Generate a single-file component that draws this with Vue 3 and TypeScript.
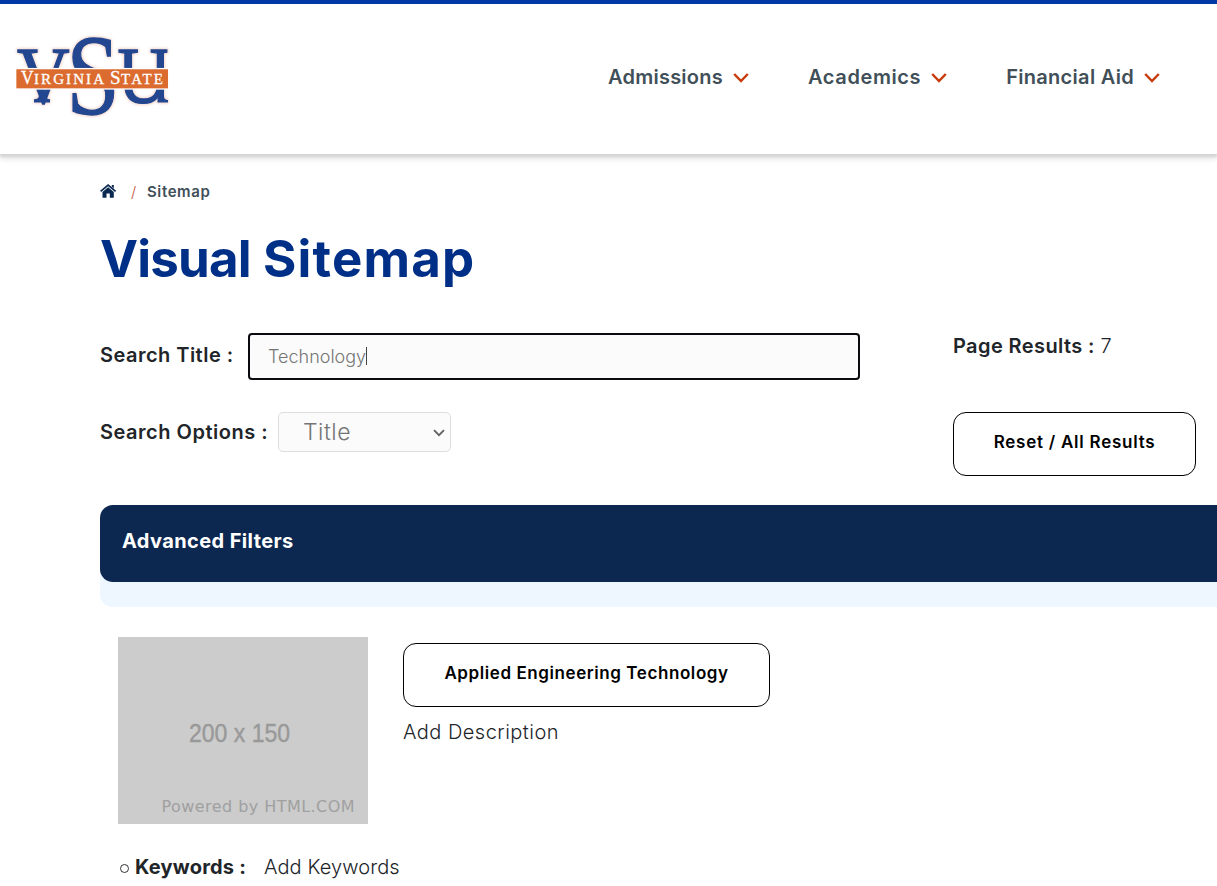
<script setup lang="ts">
import { ref } from 'vue'

interface NavItem { label: string; key: string }

const nav: NavItem[] = [
  { label: 'Admissions', key: 'admissions' },
  { label: 'Academics', key: 'academics' },
  { label: 'Financial Aid', key: 'aid' },
]
const query = ref('Technology')
const option = ref('Title')
const resultCount = 7
</script>

<template>
  <div class="page">
    <header class="header">
      <svg class="logo" width="160" height="88" viewBox="12 32 160 88" role="img" aria-label="Virginia State">
        <g class="letters">
          <text transform="translate(17 103) scale(.91 1)" font-size="80">V</text>
          <path d="M34 99.2q5 0 5-4h7q0 4 4 4v3.2H34z" />
          <text class="s" transform="translate(66.5 113.8) scale(.83 1)" font-size="115">S</text>
          <text transform="translate(117.5 103) scale(.88 1)" font-size="80">U</text>
          <path d="M157.5 52h6.5v44q0 4 4 4v2.5h-10.5z" />
        </g>
        <rect class="band" x="15.7" y="68.6" width="153" height="20.4" />
        <text class="band-text" y="84.3" font-size="15">
          <tspan x="21" font-size="19" textLength="12.5" lengthAdjust="spacingAndGlyphs">V</tspan>
          <tspan x="34" textLength="70" lengthAdjust="spacing">IRGINIA</tspan>
          <tspan x="110" font-size="19">S</tspan>
          <tspan x="121" textLength="42" lengthAdjust="spacing">TATE</tspan>
        </text>
      </svg>
      <nav class="nav">
        <a v-for="item in nav" :key="item.key" class="nav-item" :class="item.key">
          <span>{{ item.label }}</span>
          <svg width="16" height="12" viewBox="0 0 16 12"><path d="M1.2 2 8 9 14.8 2" /></svg>
        </a>
      </nav>
    </header>

    <main class="main">
      <div class="crumbs">
        <svg width="17" height="14" viewBox="0 0 17 14">
          <path class="roof" d="M.6 7.4 8.1 1.1 15.6 7.4" />
          <path class="house" d="M8.1 3.3 13.8 8.1V13.2q0 .5-.5.5H9.8V9.5H6.5v4.2H3q-.5 0-.5-.5V8.1ZM11.8 1h2v3.4l-2-1.7z" />
        </svg>
        <span class="slash">/</span>
        <span class="here">Sitemap</span>
      </div>
      <h1 class="title"><span class="visual">Visual</span> <span class="sitemap">Sitemap</span></h1>

      <div class="search">
        <div class="fields">
          <div class="row first">
            <span class="label title-label">Search Title :</span>
            <div class="input"><span class="query">{{ query }}</span><i class="caret"></i></div>
          </div>
          <div class="row">
            <span class="label options-label">Search Options :</span>
            <div class="select">
              <span>{{ option }}</span>
              <svg width="12" height="8" viewBox="0 0 12 8"><path d="M1 1.2 6 6.2 11 1.2" /></svg>
            </div>
          </div>
        </div>
        <div class="results">
          <div class="count"><b>Page Results :</b> <span>{{ resultCount }}</span></div>
          <button class="btn reset"><span>Reset / All Results</span></button>
        </div>
      </div>

      <section class="filters">
        <div class="filters-head"><span>Advanced Filters</span></div>
      </section>

      <article class="entry">
        <svg class="thumb" width="250" height="187" viewBox="0 0 250 187">
          <rect width="250" height="187" fill="#ccc" />
          <text class="size" x="71" y="104.5" textLength="101" lengthAdjust="spacingAndGlyphs">200 x 150</text>
          <text class="powered" x="43.5" y="174.5" textLength="193" lengthAdjust="spacing">Powered by HTML.COM</text>
        </svg>
        <div class="info">
          <button class="btn program"><span>Applied Engineering Technology</span></button>
          <p class="desc">Add Description</p>
        </div>
      </article>
      <div class="keywords">
        <i class="bullet"></i><b>Keywords :</b><span>Add Keywords</span>
      </div>
    </main>
  </div>
</template>

<style>
body { background: #fff; overflow: hidden; }
</style>

<style scoped>
* { box-sizing: border-box; }
.page {
  width: 100%;
  height: 886px;
  overflow: hidden;
  font-family: Inter, "Liberation Sans", sans-serif;
  font-size: 20px;
  color: #212529;
}
.page span, .page b, .page p, .page h1 { white-space: nowrap; }
.header {
  height: 154px;
  border-top: 4px solid #0039a6;
  display: flex;
  justify-content: space-between;
  padding: 28px 57px 0 12px;
  box-shadow: 0 3px 2px #d6d6d6, 0 5px 6px #e4e4e4;
}
.logo { overflow: visible; }
.logo text { font-family: "Liberation Serif", serif; }
.letters {
  fill: #22468f;
  filter: drop-shadow(0 0 .8px #fff) drop-shadow(0 0 1px #e8ab98);
}
.letters text { stroke: #22468f; stroke-width: 1.3; }
.band { fill: #dc6b2f; stroke: #fff; stroke-width: 1.3; }
.logo .band-text { fill: #fff; stroke: #fff; stroke-width: .3; }
.nav { display: flex; height: 90px; align-items: center; gap: 59px; }
.nav-item { display: flex; align-items: center; gap: 10px; font-weight: 600; color: #414f59; line-height: 24px; }
.nav-item svg { fill: none; stroke: #c83c0c; stroke-width: 2.5; margin-top: 2px; }
.admissions { letter-spacing: .25px; }
.academics { letter-spacing: .6px; }
.aid { letter-spacing: .3px; }
.main { padding-left: 100px; }
.crumbs { display: flex; align-items: center; height: 24px; margin-top: 25px; font-size: 15px; }
.roof { fill: none; stroke: #0b2851; stroke-width: 1.7; }
.house { fill: #0b2851; }
.slash { margin-left: 14px; color: #c0553c; font-weight: 300; width: 16px; }
.here { font-weight: 600; color: #414f59; letter-spacing: .6px; }
.title {
  margin: 26px 0 0;
  font-size: 51px;
  line-height: 60px;
  font-weight: 700;
  color: #002f87;
}
.visual { letter-spacing: -.8px; }
.sitemap { letter-spacing: 1.2px; }
.search { display: flex; margin-top: 44px; height: 172px; }
.fields { width: 853px; flex: none; }
.row { display: flex; align-items: center; height: 40px; }
.row.first { height: 47px; margin-bottom: 32px; }
.label { font-weight: 600; flex: none; }
.title-label { width: 148px; letter-spacing: .47px; padding-bottom: 3px; }
.options-label { width: 178px; letter-spacing: .52px; }
.input {
  width: 612px;
  height: 47px;
  border: 2px solid #0b0b0f;
  border-radius: 4px;
  background: #fbfbfb;
  display: flex;
  align-items: center;
  padding: 0 0 1px 18px;
  color: #757575;
  font-weight: 300;
  font-size: 18px;
}
.caret { width: 1px; height: 18px; background: #444; }
.select {
  width: 173px;
  height: 40px;
  border: 1px solid #dedede;
  border-radius: 5px;
  background: #fbfbfb;
  display: flex;
  align-items: center;
  justify-content: space-between;
  padding: 0 5px 1px 24px;
  color: #757575;
  font-weight: 300;
  font-size: 23px;
  letter-spacing: .5px;
}
.select svg { fill: none; stroke: #606060; stroke-width: 1.8; margin-top: 3px; }
.count { height: 79px; line-height: 26px; font-weight: 300; }
.count b { font-weight: 600; letter-spacing: .4px; }
.btn {
  display: flex;
  align-items: center;
  justify-content: center;
  height: 64px;
  padding: 0 0 4px;
  border: 1px solid #000;
  border-radius: 13px;
  background: #fff;
  color: #000;
  font: 600 17px Inter, sans-serif;
}
.reset { width: 243px; letter-spacing: .75px; }
.program { width: 367px; letter-spacing: .58px; }
.filters { height: 102px; background: #eef6ff; border-radius: 13px 0 0 13px; }
.filters-head {
  height: 77px;
  border-radius: 13px 0 0 13px;
  background: #0c2750;
  color: #fff;
  font-weight: 700;
  padding: 24px 22px;
  line-height: 24px;
  letter-spacing: .39px;
}
.entry { display: flex; padding: 30px 0 0 18px; height: 217px; }
.size { font-family: "Liberation Sans", sans-serif; font-size: 25px; fill: #999; stroke: #999; stroke-width: .4; }
.powered { font-family: "DejaVu Sans", sans-serif; font-size: 16px; fill: #a0a0a0; }
.info { margin-left: 35px; padding-top: 6px; }
.desc { margin: 12px 0 0; line-height: 26px; font-weight: 300; letter-spacing: .47px; }
.keywords { display: flex; align-items: center; height: 26px; margin: 30px 0 0 20px; font-weight: 300; }
.keywords b { font-weight: 700; width: 129px; letter-spacing: .2px; }
.keywords span { letter-spacing: .1px; }
.bullet { width: 9px; height: 9px; border: 1px solid #333; border-radius: 50%; margin-right: 6px; margin-top: 2px; }
</style>
